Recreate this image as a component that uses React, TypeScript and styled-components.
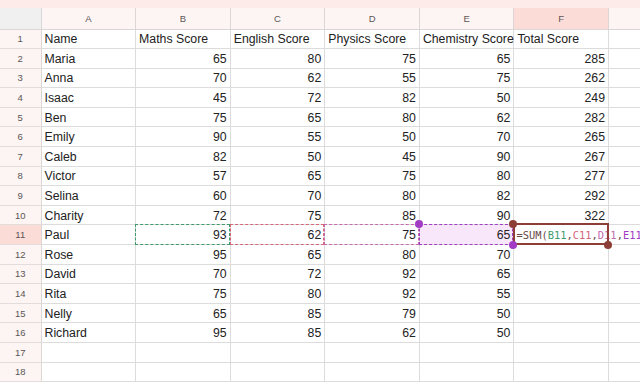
import styled, { createGlobalStyle } from "styled-components"

const GlobalStyle = createGlobalStyle`
    html, body {
        margin: 0;
        padding: 0;
        background: #ffffff;
        overflow: hidden;
    }
    body {
        font-family: "Liberation Sans", Arial, sans-serif;
    }
`

const COLS = ["A", "B", "C", "D", "E", "F", "G"]

// rows of the sheet: name, maths, english, physics, chemistry, total
const rows: (string | number)[][] = [
    ["Name", "Maths Score", "English Score", "Physics Score", "Chemistry Score", "Total Score"],
    ["Maria", 65, 80, 75, 65, 285],
    ["Anna", 70, 62, 55, 75, 262],
    ["Isaac", 45, 72, 82, 50, 249],
    ["Ben", 75, 65, 80, 62, 282],
    ["Emily", 90, 55, 50, 70, 265],
    ["Caleb", 82, 50, 45, 90, 267],
    ["Victor", 57, 65, 75, 80, 277],
    ["Selina", 60, 70, 80, 82, 292],
    ["Charity", 72, 75, 85, 90, 322],
    ["Paul", 93, 62, 75, 65, ""],
    ["Rose", 95, 65, 80, 70, ""],
    ["David", 70, 72, 92, 65, ""],
    ["Rita", 75, 80, 92, 55, ""],
    ["Nelly", 65, 85, 79, 50, ""],
    ["Richard", 95, 85, 62, 50, ""],
    [],
    [],
]

const refColors: Record<number, string> = {
    1: "#3f9a6e",
    2: "#d5667a",
    3: "#c56bb0",
    4: "#a23cc4",
}

const App = () => {
    return (
        <>
            <GlobalStyle />
            <Page>
                <TopBand />
                <Grid>
                    <Corner />
                    {COLS.map((c) => (
                        <ColHead key={c} $active={c === "F"}>{c}</ColHead>
                    ))}
                    {rows.map((row, r) => {
                        const rowNo = r + 1
                        return [
                            <RowHead key={`h${r}`} $active={rowNo === 11}>{rowNo}</RowHead>,
                            ...COLS.map((_, ci) => {
                                const v = row[ci]
                                const isNum = typeof v === "number"
                                if (rowNo === 11 && ci === 5) {
                                    return (
                                        <Cell key={`${r}-${ci}`}>
                                            <FormulaBox />
                                            <Formula>
                                                =SUM(<Ref $c={refColors[1]}>B11</Ref>,<Ref $c={refColors[2]}>C11</Ref>,<Ref $c={refColors[3]}>D11</Ref>,<Ref $c={refColors[4]}>E11</Ref>)
                                            </Formula>
                                            <Dot $c="#8c3e37" $pos="tl" />
                                            <Dot $c="#8c3e37" $pos="br" />
                                        </Cell>
                                    )
                                }
                                const ref = rowNo === 11 && ci >= 1 && ci <= 4 ? refColors[ci] : undefined
                                return (
                                    <Cell key={`${r}-${ci}`} $num={isNum} $fill={rowNo === 11 && ci === 4}>
                                        {ref && <RefBorder $c={ref} />}
                                        {v}
                                        {rowNo === 11 && ci === 4 && (
                                            <>
                                                <Dot $c={ref!} $pos="tl" />
                                                <Dot $c={ref!} $pos="br" />
                                            </>
                                        )}
                                    </Cell>
                                )
                            }),
                        ]
                    })}
                </Grid>
            </Page>
        </>
    )
}

const Page = styled.div`
    width: 640px;
    height: 382px;
    overflow: hidden;
    background: #ffffff;
`

const TopBand = styled.div`
    height: 8px;
    background: #fcebe8;
`

const Grid = styled.div`
    display: grid;
    grid-template-columns: 41.5px repeat(7, 94.6px);
    grid-template-rows: 21.5px repeat(18, 19.6px);
`

const Corner = styled.div`
    background: #f1f0f0;
    border-right: 1px solid #d8d6d6;
    border-bottom: 1px solid #d8d6d6;
`

const ColHead = styled.div<{ $active?: boolean }>`
    display: flex;
    align-items: center;
    justify-content: center;
    font-size: 9.5px;
    color: #5b5656;
    background: ${(p) => (p.$active ? "#fcdcd6" : "#fdf5f3")};
    border-right: 1px solid #dcd6d5;
    border-bottom: 1px solid #dcd6d5;
`

const RowHead = styled.div<{ $active?: boolean }>`
    display: flex;
    align-items: center;
    justify-content: center;
    font-size: 9.5px;
    color: #5b5656;
    background: ${(p) => (p.$active ? "#fcdcd6" : "#fdf5f3")};
    border-right: 1px solid #dcd6d5;
    border-bottom: 1px solid #e2dcdb;
`

const Cell = styled.div<{ $num?: boolean; $fill?: boolean }>`
    position: relative;
    display: flex;
    align-items: center;
    justify-content: ${(p) => (p.$num ? "flex-end" : "flex-start")};
    padding: 1px 3px 0;
    font-size: 12.3px;
    color: #222222;
    white-space: nowrap;
    overflow: visible;
    background: ${(p) => (p.$fill ? "#f8e6fa" : "transparent")};
    border-right: 1px solid #dcdcdc;
    border-bottom: 1px solid #dcdcdc;
`

const RefBorder = styled.span<{ $c: string }>`
    position: absolute;
    inset: -1px 0 -1px -1px;
    border: 1px dashed ${(p) => p.$c};
    pointer-events: none;
`

const FormulaBox = styled.span`
    position: absolute;
    inset: -2px -1px -1px -1px;
    border: 2px solid #8c3e37;
    z-index: 2;
`

const Formula = styled.span`
    position: relative;
    z-index: 1;
    margin-left: -1px;
    padding-right: 4px;
    background: #ffffff;
    font-family: "DejaVu Sans Mono", "Liberation Mono", monospace;
    font-size: 10.4px;
    color: #6a4a48;
`

const Ref = styled.span<{ $c: string }>`
    color: ${(p) => p.$c};
`

const Dot = styled.span<{ $c: string; $pos: "tl" | "br" }>`
    position: absolute;
    width: 8px;
    height: 8px;
    border-radius: 50%;
    background: ${(p) => p.$c};
    z-index: 3;
    ${(p) => (p.$pos === "tl" ? "top: -5px; left: -5px;" : "bottom: -5px; right: -4px;")}
`

export default App
